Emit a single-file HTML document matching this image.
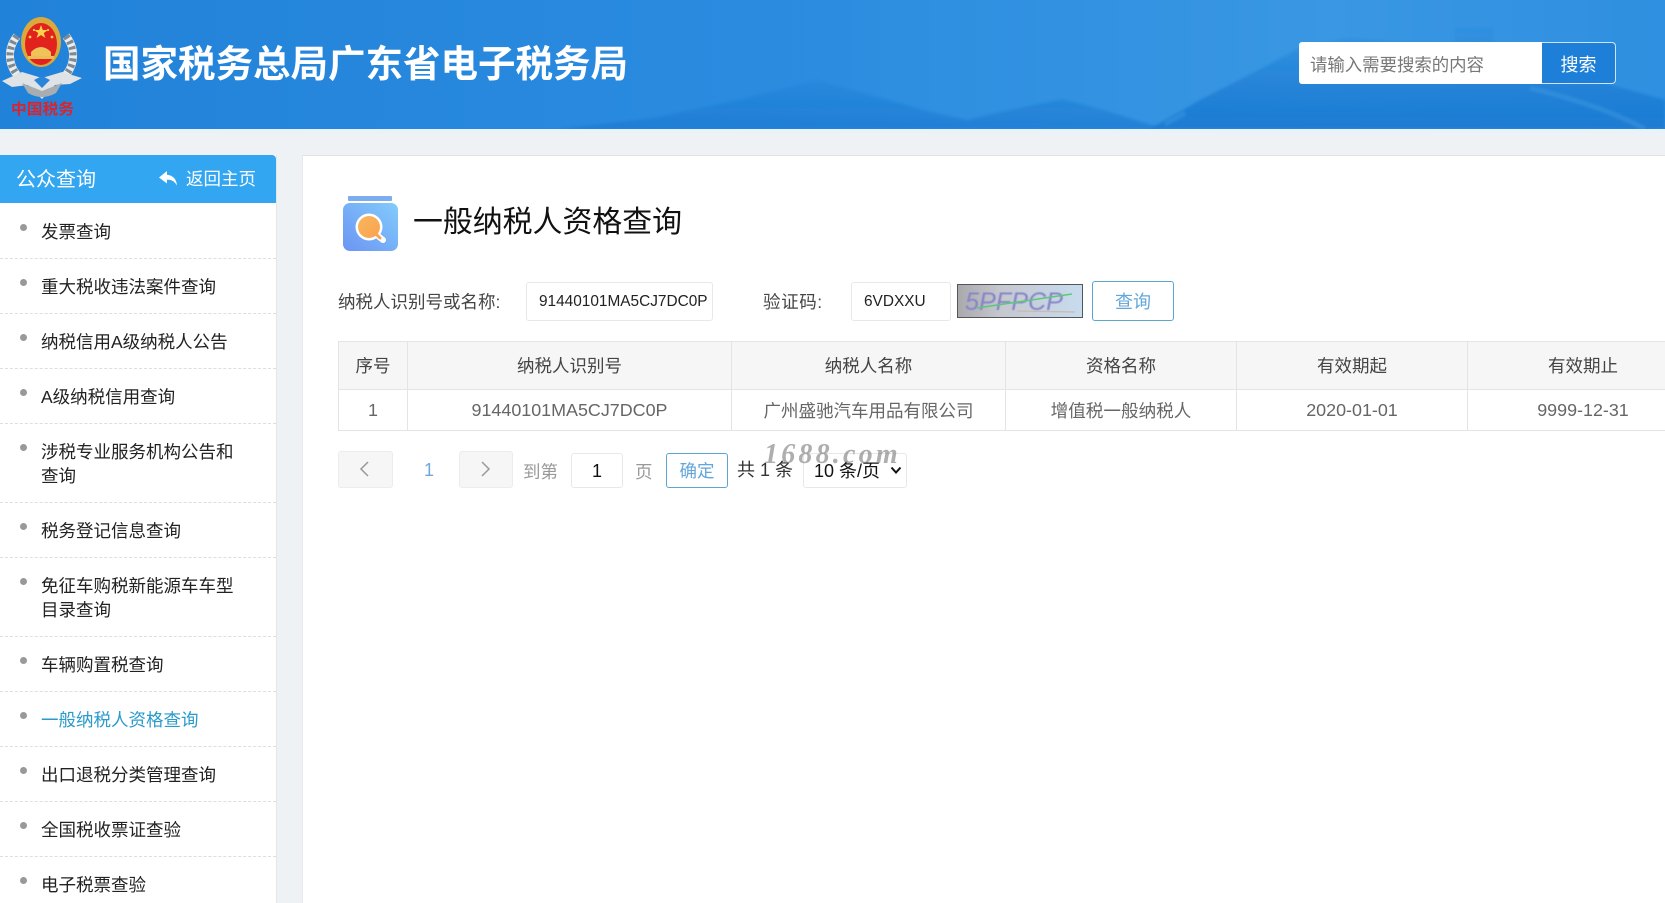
<!DOCTYPE html>
<html lang="zh-CN">
<head>
<meta charset="utf-8">
<title>一般纳税人资格查询</title>
<style>
html,body{margin:0;padding:0;width:1665px;height:903px;overflow:hidden;background:#eff2f5;}
body{position:relative;font-family:"Liberation Sans","Noto Sans CJK SC",sans-serif;font-size:17.5px;color:#333;}
.a{position:absolute;white-space:nowrap;}
.box{position:absolute;box-sizing:border-box;background:#fff;border:1px solid #e8e8e8;border-radius:3px;}
.c{display:flex;align-items:center;justify-content:center;}
#hdr{position:absolute;left:0;top:0;width:1665px;height:129px;overflow:hidden;}
.side-item{position:absolute;left:0;width:276px;box-sizing:border-box;border-bottom:1px dashed #dedede;}
.side-item i{position:absolute;left:20px;top:21px;width:7px;height:7px;border-radius:50%;background:#999;}
.side-item span{position:absolute;left:41px;top:16.5px;line-height:24px;color:#222;white-space:nowrap;}
.th,.td{position:absolute;box-sizing:border-box;display:flex;align-items:center;justify-content:center;white-space:nowrap;overflow:visible;}
.th{top:342px;height:48px;background:#f6f6f6;color:#444;border-right:1px solid #e4e4e4;border-bottom:1px solid #e4e4e4;}
.td{top:390px;height:41px;color:#666;font-size:17.9px;border-right:1px solid #e4e4e4;border-bottom:1px solid #e4e4e4;}
</style>
</head>
<body>

<div id="hdr">
<svg width="1665" height="129" viewBox="0 0 1665 129" style="position:absolute;left:0;top:0">
<defs>
<linearGradient id="bg" x1="0" y1="0" x2="1" y2="0">
<stop offset="0" stop-color="#2182d9"/><stop offset=".45" stop-color="#2a8bdf"/><stop offset=".8" stop-color="#3997e3"/><stop offset="1" stop-color="#2f8fe0"/>
</linearGradient>
<linearGradient id="m1" x1="0" y1="0" x2="0" y2="1">
<stop offset="0" stop-color="#1b7bd2" stop-opacity=".25"/><stop offset="1" stop-color="#1b7bd2" stop-opacity=".75"/>
</linearGradient>
<linearGradient id="m2" x1="0" y1="0" x2="0" y2="1">
<stop offset="0" stop-color="#1b7bd2" stop-opacity=".12"/><stop offset=".5" stop-color="#1b7bd2" stop-opacity=".6"/><stop offset="1" stop-color="#1b7bd2" stop-opacity="1"/>
</linearGradient>
<filter id="bl"><feGaussianBlur stdDeviation="1.2"/></filter>
</defs>
<rect width="1665" height="129" fill="url(#bg)"/>
<path d="M560 129L654 118L740 100L817 80L880 98L930 112L967 120L1010 110L1062 99L1110 112L1164 129Z" fill="url(#m1)" filter="url(#bl)"/>
<path d="M1150 129L1200 100L1255 72L1300 48L1350 38L1395 42L1455 42V28H1493V42L1530 60L1580 76L1665 100V129Z" fill="url(#m2)" filter="url(#bl)"/>
<path d="M1165 124L1185 113M1530 88C1580 100 1620 115 1645 129" stroke="#4a9fe4" stroke-width="5" fill="none" opacity=".4" filter="url(#bl)"/>
</svg>
<!-- emblem -->
<svg width="90" height="129" viewBox="0 0 90 129" style="position:absolute;left:0;top:0">
<g fill="none">
<path d="M17 36C6 50 8 68 22 80" stroke="#e8ecee" stroke-width="8"/>
<path d="M66 36C77 50 75 68 61 80" stroke="#e8ecee" stroke-width="8"/>
<path d="M17 36C6 50 8 68 22 80" stroke="#7f888e" stroke-width="7" stroke-dasharray="3 3"/>
<path d="M66 36C77 50 75 68 61 80" stroke="#7f888e" stroke-width="7" stroke-dasharray="3 3"/>
</g>
<ellipse cx="41" cy="42" rx="20" ry="25" fill="#d9a93c"/>
<ellipse cx="41" cy="44" rx="16" ry="21" fill="#e2231d"/>
<path d="M41 25l1.8 5h5.2l-4.2 3 1.6 5-4.4-3-4.4 3 1.6-5-4.2-3h5.2z" fill="#f7d24a"/>
<circle cx="30" cy="37" r="1.4" fill="#f7d24a"/><circle cx="52" cy="37" r="1.4" fill="#f7d24a"/><circle cx="34" cy="30" r="1.1" fill="#f7d24a"/><circle cx="48" cy="30" r="1.1" fill="#f7d24a"/>
<path d="M31 52Q41 42 51 52V56H31Z" fill="#f0c35a"/>
<rect x="28" y="56" width="26" height="3" fill="#edbd55"/>
<path d="M2 81L22 72L42 78L62 72L82 78L70 84L55 85L42 99L28 85L12 87Z" fill="#dfe3e6"/>
<path d="M22 83L42 91L62 83L56 93Q42 101 28 93Z" fill="#a7adb1"/>
<path d="M34 80L42 76L50 80L42 88Z" fill="#2a85d9"/>
<text x="11" y="114" font-family="'Noto Sans CJK SC',sans-serif" font-size="15" font-weight="700" fill="#d9242e" textLength="63" lengthAdjust="spacingAndGlyphs">中国税务</text>
</svg>
<div class="a" style="left:103px;top:39px;font-size:37.5px;line-height:50px;font-weight:700;color:#fff;">国家税务总局广东省电子税务局</div>
<div class="a" style="left:1299px;top:42px;width:244px;height:42px;background:#fff;border-radius:3px 0 0 3px;"></div>
<div class="a" style="left:1310px;top:42px;line-height:46px;font-size:17.4px;color:#777;">请输入需要搜索的内容</div>
<div class="a c" style="left:1542px;top:42px;width:74px;height:42px;box-sizing:border-box;background:#1e7fd8;border:1px solid #cfe4f6;border-left:0;border-radius:0 4px 4px 0;color:#fff;font-size:18px;padding-top:1px;">搜索</div>
</div>
<div class="a" style="left:0;top:129px;width:1665px;height:4px;background:#e9f2f7;"></div>

<!-- sidebar -->
<div class="a" style="left:0;top:155px;width:277px;height:748px;background:#fff;border-right:1px solid #e3e6ea;box-sizing:border-box;"></div>
<div class="a" style="left:0;top:155px;width:276px;height:48px;background:#33a6f2;border-radius:0 4px 0 0;"></div>
<div class="a" style="left:16px;top:156px;line-height:48px;font-size:20px;color:#fff;">公众查询</div>
<svg class="a" style="left:158px;top:170px" width="20" height="16" viewBox="0 0 20 16"><path d="M9 1L1 7.5L9 13.5V9.6C13 9.6 16.5 11 19 15.5C18.5 9.5 15 5.2 9 4.8Z" fill="#fff"/></svg>
<div class="a" style="left:186px;top:155px;line-height:48px;font-size:17.5px;color:#fff;">返回主页</div>

<div class="side-item" style="top:203px;height:56px"><i></i><span>发票查询</span></div>
<div class="side-item" style="top:258px;height:56px"><i></i><span>重大税收违法案件查询</span></div>
<div class="side-item" style="top:313px;height:56px"><i></i><span>纳税信用A级纳税人公告</span></div>
<div class="side-item" style="top:368px;height:56px"><i></i><span>A级纳税信用查询</span></div>
<div class="side-item" style="top:423px;height:80px"><i></i><span>涉税专业服务机构公告和<br>查询</span></div>
<div class="side-item" style="top:502px;height:56px"><i></i><span>税务登记信息查询</span></div>
<div class="side-item" style="top:557px;height:80px"><i></i><span>免征车购税新能源车车型<br>目录查询</span></div>
<div class="side-item" style="top:636px;height:56px"><i></i><span>车辆购置税查询</span></div>
<div class="side-item" style="top:691px;height:56px"><i></i><span style="color:#2a9acb">一般纳税人资格查询</span></div>
<div class="side-item" style="top:746px;height:56px"><i></i><span>出口退税分类管理查询</span></div>
<div class="side-item" style="top:801px;height:56px"><i></i><span>全国税收票证查验</span></div>
<div class="side-item" style="top:856px;height:56px"><i></i><span>电子税票查验</span></div>

<!-- main -->
<div class="a" style="left:302px;top:155px;width:1363px;height:748px;background:#fff;border-top:1px solid #e0e2e5;border-left:1px solid #e6e8eb;box-sizing:border-box;"></div>

<svg class="a" style="left:343px;top:195px" width="56" height="57" viewBox="0 0 56 57">
<defs><linearGradient id="ic" x1="0" y1="1" x2="1" y2="0"><stop offset="0" stop-color="#6c94f3"/><stop offset="1" stop-color="#82ccfb"/></linearGradient>
<linearGradient id="ic2" x1="0" y1="0" x2="1" y2="1"><stop offset="0" stop-color="#f7b65e"/><stop offset="1" stop-color="#fba24f"/></linearGradient></defs>
<rect x="5" y="1" width="44" height="5" rx="1" fill="#7dacef"/>
<rect x="0" y="8" width="55" height="48" rx="7" fill="url(#ic)"/>
<path d="M35 41L40 45" stroke="#fff" stroke-width="6" stroke-linecap="round"/>
<circle cx="26" cy="32" r="13.5" fill="#fff"/>
<path d="M33 39L37 43" stroke="#fba24f" stroke-width="3" stroke-linecap="round"/>
<circle cx="26" cy="32" r="11" fill="url(#ic2)"/>
</svg>
<div class="a" style="left:413px;top:201px;font-size:29.9px;line-height:44px;color:#111;">一般纳税人资格查询</div>

<div class="a" style="left:338px;top:289px;line-height:26px;color:#444;">纳税人识别号或名称:</div>
<div class="box" style="left:526px;top:282px;width:187px;height:39px;"></div>
<div class="a" style="left:539px;top:289px;line-height:26px;font-size:15.4px;color:#222;">91440101MA5CJ7DC0P</div>
<div class="a" style="left:763px;top:289px;line-height:26px;color:#444;letter-spacing:.6px;">验证码:</div>
<div class="box" style="left:851px;top:282px;width:100px;height:39px;"></div>
<div class="a" style="left:864px;top:289px;line-height:26px;font-size:15.4px;color:#222;">6VDXXU</div>
<svg class="a" style="left:957px;top:284px" width="126" height="34" viewBox="0 0 126 34">
<defs><linearGradient id="cap" x1="0" y1="0" x2="1" y2="0"><stop offset="0" stop-color="#a9a9ad"/><stop offset=".35" stop-color="#c5c8cf"/><stop offset="1" stop-color="#c7dcef"/></linearGradient></defs>
<rect x=".5" y=".5" width="125" height="33" fill="url(#cap)" stroke="#555"/>
<text x="8" y="26" font-family="'Liberation Sans',sans-serif" font-size="25" font-style="italic" fill="#8684c8" textLength="98" lengthAdjust="spacingAndGlyphs" style="filter:blur(.4px)">5PFPCP</text>
<path d="M20 24L115 10" stroke="#5fc77c" stroke-width="1.6"/>
<path d="M60 27L118 28" stroke="#cdb9ad" stroke-width="1.2"/>
</svg>
<div class="a c" style="left:1092px;top:281px;width:82px;height:40px;box-sizing:border-box;background:#fff;border:1px solid #5ba6cf;border-radius:3px;color:#62a6da;font-size:18px;">查询</div>

<!-- table -->
<div class="a" style="left:338px;top:341px;width:1327px;height:1px;background:#e4e4e4"></div>
<div class="a" style="left:338px;top:341px;width:1px;height:90px;background:#e4e4e4"></div>
<div class="th" style="left:339px;width:69px;">序号</div>
<div class="th" style="left:408px;width:324px;">纳税人识别号</div>
<div class="th" style="left:732px;width:274px;">纳税人名称</div>
<div class="th" style="left:1006px;width:231px;">资格名称</div>
<div class="th" style="left:1237px;width:231px;">有效期起</div>
<div class="th" style="left:1468px;width:231px;">有效期止</div>
<div class="td" style="left:339px;width:69px;">1</div>
<div class="td" style="left:408px;width:324px;">91440101MA5CJ7DC0P</div>
<div class="td" style="left:732px;width:274px;font-size:17.5px;">广州盛驰汽车用品有限公司</div>
<div class="td" style="left:1006px;width:231px;font-size:17.6px;">增值税一般纳税人</div>
<div class="td" style="left:1237px;width:231px;">2020-01-01</div>
<div class="td" style="left:1468px;width:231px;">9999-12-31</div>

<!-- pagination -->
<div class="box" style="left:338px;top:451px;width:55px;height:37px;background:#f6f6f6;border-color:#ececec"></div>
<svg class="a" style="left:358px;top:460px" width="14" height="18" viewBox="0 0 14 18"><path d="M10 2L3 9L10 16" fill="none" stroke="#999" stroke-width="1.5"/></svg>
<div class="a" style="left:424px;top:457px;line-height:26px;font-size:18px;color:#6fa8dc;">1</div>
<div class="box" style="left:459px;top:451px;width:54px;height:37px;background:#f6f6f6;border-color:#ececec"></div>
<svg class="a" style="left:478px;top:460px" width="14" height="18" viewBox="0 0 14 18"><path d="M4 2L11 9L4 16" fill="none" stroke="#999" stroke-width="1.5"/></svg>
<div class="a" style="left:523px;top:459px;line-height:26px;color:#999;">到第</div>
<div class="box c" style="left:571px;top:453px;width:52px;height:35px;color:#111;font-size:18px;padding-top:2px;">1</div>
<div class="a" style="left:635px;top:459px;line-height:26px;color:#999;">页</div>
<div class="a c" style="left:666px;top:453px;width:62px;height:35px;box-sizing:border-box;background:#fff;border:1px solid #5ba6cf;border-radius:3px;color:#62a6da;">确定</div>
<div class="a" style="left:737px;top:457px;line-height:26px;font-size:18px;color:#333;">共 1 条</div>
<div class="box" style="left:803px;top:453px;width:104px;height:35px;"></div>
<div class="a" style="left:814px;top:458px;line-height:26px;font-size:18px;color:#111;">10 条/页</div>
<svg class="a" style="left:890px;top:466px" width="12" height="9" viewBox="0 0 12 9"><path d="M1.5 1.5L6 6.5L10.5 1.5" fill="none" stroke="#111" stroke-width="2"/></svg>
<div class="a" style="left:764px;top:436px;font-family:'Liberation Serif',serif;font-style:italic;font-weight:700;font-size:28px;line-height:38px;letter-spacing:3.2px;color:rgba(120,120,120,.6);">1688.com</div>

</body>
</html>
